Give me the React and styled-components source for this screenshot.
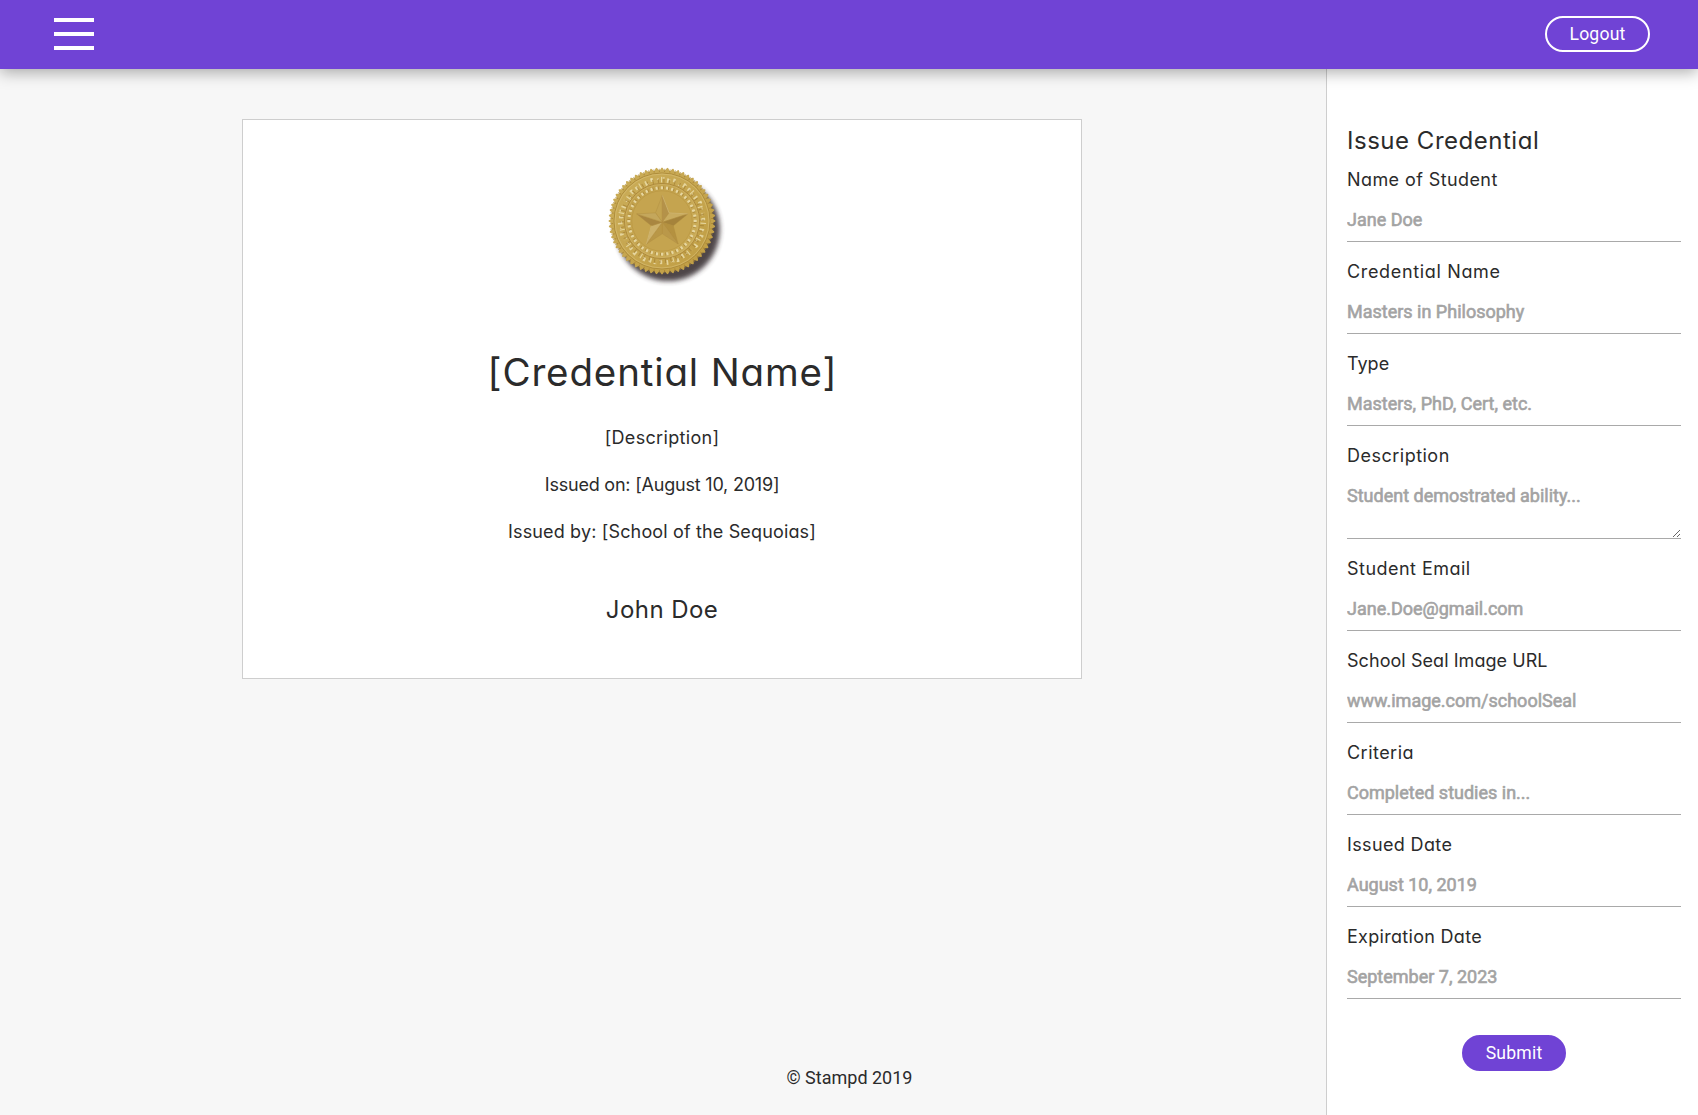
import React from "react";
import styled, { createGlobalStyle } from "styled-components";

const colors = {
  purple: "#7043d5",
  page: "#f7f7f7",
  text: "#2b2b2b",
  rule: "#a9a9a9",
  edge: "#cecece",
};

const GlobalStyle = createGlobalStyle`
  *, *::before, *::after { box-sizing: border-box; }
  body {
    margin: 0;
    color: ${colors.text};
    background: ${colors.page};
    font-family: Roboto, "Liberation Sans", sans-serif;
    font-size: 18px;
  }
`;

const Page = styled.div`
  display: flex;
  flex-direction: column;
  height: 100vh;
`;

const Header = styled.header`
  display: flex;
  flex: none;
  align-items: flex-start;
  justify-content: space-between;
  height: 69px;
  padding: 16px 48px 0 54px;
  background: ${colors.purple};
  box-shadow: 0 3px 15px rgba(0, 0, 0, 0.34);
  z-index: 1;
`;

const MenuButton = styled.button`
  display: flex;
  flex-direction: column;
  gap: 10px;
  width: 40px;
  margin: 2px 0 0;
  padding: 0;
  border: 0;
  background: none;
`;

const MenuBar = styled.span`
  height: 4px;
  background: #fff;
`;

const PillButton = styled.button`
  width: ${(p) => p.$width}px;
  height: 36px;
  padding: 0;
  border: 2px solid ${(p) => (p.$outlined ? "#fff" : colors.purple)};
  border-radius: 18px;
  background: ${colors.purple};
  color: #fff;
  font-family: inherit;
  font-size: 17.6px;
  line-height: 32px;
  letter-spacing: 0.2px;
`;

const Body = styled.div`
  display: flex;
  flex: 1;
  min-height: 0;
`;

const Main = styled.main`
  display: flex;
  flex: 1;
  flex-direction: column;
  justify-content: space-between;
  padding: 50px 2px 25px 0;
`;

const Certificate = styled.section`
  display: flex;
  flex-direction: column;
  align-items: center;
  align-self: center;
  width: 840px;
  height: 560px;
  padding-top: 35px;
  border: 1px solid ${colors.edge};
  background: #fff;
`;

const displayFont = `
  font-family: Inter, "Liberation Sans", sans-serif;
  font-feature-settings: "cv11";
  font-weight: 400;
`;

const CertificateName = styled.h1`
  ${displayFont}
  margin: 57px 0 26px;
  font-size: 38.5px;
  line-height: 56px;
  letter-spacing: 0.86px;
  text-indent: 0.86px;
`;

const CertificateLine = styled.p`
  ${displayFont}
  margin: 0 0 23px;
  font-size: 18px;
  line-height: 24px;
  letter-spacing: ${(p) => p.$tracking}px;
`;

const Signature = styled.p`
  ${displayFont}
  margin: 25px 0 0;
  font-size: 24px;
  line-height: 36px;
  letter-spacing: 0.43px;
`;

const Footer = styled.footer`
  padding-left: 375px;
  line-height: 24px;
  text-align: center;
`;

const Sidebar = styled.aside`
  display: flex;
  flex: none;
  flex-direction: column;
  width: 372px;
  padding: 54px 17px 0 20px;
  border-left: 1px solid ${colors.edge};
  background: #fff;
`;

const FormTitle = styled.h2`
  ${displayFont}
  margin: 0 0 9px;
  font-size: 24px;
  line-height: 36px;
  letter-spacing: 0.52px;
`;

const Form = styled.form`
  display: flex;
  flex-direction: column;
  gap: 18px;
`;

const Field = styled.label`
  display: flex;
  flex-direction: column;
  gap: 13px;
`;

const Label = styled.span`
  ${displayFont}
  font-size: 18px;
  line-height: 24px;
  letter-spacing: ${(p) => p.$tracking}px;
`;

const Input = styled.input`
  display: block;
  width: 100%;
  height: ${(p) => (p.$multiline ? 58 : 37)}px;
  padding: ${(p) => (p.$multiline ? "4px 0 0" : "0 0 8px")};
  border: 0;
  border-bottom: 1px solid ${colors.rule};
  border-radius: 0;
  outline: 0;
  background: transparent;
  font-family: inherit;
  font-size: 18px;
  line-height: 21px;

  &::placeholder {
    color: #a3a3a3;
    opacity: 1;
    -webkit-text-stroke: 0.6px #a3a3a3;
  }
`;

const Actions = styled.div`
  display: flex;
  justify-content: center;
  padding-top: 18px;
`;

const SealImage = styled.svg`
  display: block;
  flex: none;
  overflow: visible;
`;

const ring = (count, fn) => Array.from({ length: count }, (_, i) => fn((i * 360) / count, i));

const polar = (radius, degrees) => {
  const a = ((degrees - 90) * Math.PI) / 180;
  return [65 + radius * Math.cos(a), 65 + radius * Math.sin(a)];
};

const scallopedEdge = Array.from({ length: 480 }, (_, i) => {
  const a = (i / 480) * 360;
  const r = 51.3 + 1.4 * Math.cos((a * 60 * Math.PI) / 180);
  return polar(r, a).map((v) => v.toFixed(2)).join(",");
}).join(" ");

const starFacets = ring(5, (a) => {
  const tip = polar(26.5, a);
  return [
    { points: [tip, polar(11.4, a - 36), [65, 65]], side: "left", a },
    { points: [tip, polar(11.4, a + 36), [65, 65]], side: "right", a },
  ];
}).flat();

const facetColor = ({ side, a }) => {
  const shades = {
    0: ["#c3a351", "#b4924a"],
    72: ["#c9ac60", "#a5833a"],
    144: ["#b4913f", "#ba984a"],
    216: ["#b99746", "#cdb16a"],
    288: ["#a98640", "#c4a75b"],
  };
  return shades[a][side === "left" ? 0 : 1];
};

function Seal() {
  return (
    <SealImage width="132" height="132" viewBox="0 0 130 130" role="img" aria-label="School seal">
      <defs>
        <linearGradient id="gold" x1="0" y1="0" x2="1" y2="1">
          <stop offset="0" stopColor="#cbae58" />
          <stop offset="0.5" stopColor="#c6a650" />
          <stop offset="1" stopColor="#bf9c40" />
        </linearGradient>
        <linearGradient id="innerGold" x1="0" y1="0" x2="1" y2="1">
          <stop offset="0" stopColor="#c1a04b" />
          <stop offset="1" stopColor="#ccae5a" />
        </linearGradient>
        <filter id="sealShadow" x="-20%" y="-20%" width="150%" height="150%">
          <feGaussianBlur stdDeviation="2.8" />
        </filter>
        <filter id="soften">
          <feGaussianBlur stdDeviation="0.45" />
        </filter>
      </defs>
      <circle cx="71" cy="73.2" r="51" fill="#3a3034" opacity="0.9" filter="url(#sealShadow)" />
      <g filter="url(#soften)">
        <polygon points={scallopedEdge} fill="url(#gold)" />
        <circle cx="65" cy="65" r="47.3" fill="none" stroke="#ad8a3a" strokeWidth="0.9" />
        <circle cx="65" cy="65" r="46.2" fill="none" stroke="#d9c078" strokeWidth="0.6" />
        {ring(60, (a) => (
          <rect key={a} x="64.5" y="13.5" width="1" height="3.2" fill="#a07b2c" opacity="0.6" transform={`rotate(${a + 3} 65 65)`} />
        ))}
        {ring(46, (a, i) => (
          <g key={a} transform={`rotate(${a} 65 65)`}>
            <rect x={64 + (i % 3) * 0.4} y={21.5 + (i % 2)} width={1.1 + (i % 3) * 0.6} height={5.6 - (i % 3)} fill="#e8d9a4" opacity={i % 7 === 3 ? 0.1 : 0.9} />
            <rect x={65.6} y={22 + (i % 4) * 1.2} width="2" height="1.2" fill="#efe2b4" opacity={i % 5 === 2 ? 0 : 0.85} />
            <rect x="66.4" y="23.5" width="1" height="4" fill="#a37f33" opacity="0.7" />
          </g>
        ))}
        <circle cx="65" cy="65" r="37" fill="url(#innerGold)" stroke="#ab873a" strokeWidth="0.9" />
        <circle cx="65" cy="65" r="36" fill="none" stroke="#d3b76c" strokeWidth="0.5" />
        {ring(40, (a) => (
          <g key={a} transform={`rotate(${a} 65 65)`}>
            <rect x="63.8" y="30.8" width="2.2" height="3" rx="0.6" fill="#e6d6a0" />
            <rect x="66" y="31" width="0.9" height="2.8" fill="#a37f33" opacity="0.7" />
          </g>
        ))}
        <circle cx="65" cy="65" r="29.8" fill="#c5a44f" stroke="#b7943f" strokeWidth="0.6" />
        <g transform="translate(0.3 1.2)">
          {starFacets.map((f) => (
            <polygon
              key={f.side + f.a}
              points={f.points.map((p) => p.join(",")).join(" ")}
              fill={facetColor(f)}
              stroke="#b08d40"
              strokeWidth="0.4"
            />
          ))}
          <path d="M65 38.5L71.7 55.8L90.2 56.8M49.4 86.4L54.2 68.5" fill="none" stroke="#d9c27f" strokeWidth="0.6" />
        </g>
      </g>
    </SealImage>
  );
}

const fields = [
  { label: "Name of Student", placeholder: "Jane Doe", tracking: 0.41 },
  { label: "Credential Name", placeholder: "Masters in Philosophy", tracking: 0.66 },
  { label: "Type", placeholder: "Masters, PhD, Cert, etc.", tracking: 0 },
  { label: "Description", placeholder: "Student demostrated ability...", tracking: 0.49, multiline: true },
  { label: "Student Email", placeholder: "Jane.Doe@gmail.com", tracking: 0.47 },
  { label: "School Seal Image URL", placeholder: "www.image.com/schoolSeal", tracking: 0.06 },
  { label: "Criteria", placeholder: "Completed studies in...", tracking: 0.47 },
  { label: "Issued Date", placeholder: "August 10, 2019", tracking: 0.36 },
  { label: "Expiration Date", placeholder: "September 7, 2023", tracking: 0.3 },
];

export default function App() {
  return (
    <Page>
      <GlobalStyle />
      <Header>
        <MenuButton aria-label="Menu">
          <MenuBar />
          <MenuBar />
          <MenuBar />
        </MenuButton>
        <PillButton $outlined $width={105}>Logout</PillButton>
      </Header>
      <Body>
        <Main>
          <Certificate>
            <Seal />
            <CertificateName>[Credential Name]</CertificateName>
            <CertificateLine $tracking={0.32}>[Description]</CertificateLine>
            <CertificateLine $tracking={-0.21}>Issued on: [August 10, 2019]</CertificateLine>
            <CertificateLine $tracking={0.15}>Issued by: [School of the Sequoias]</CertificateLine>
            <Signature>John Doe</Signature>
          </Certificate>
          <Footer>© Stampd 2019</Footer>
        </Main>
        <Sidebar>
          <FormTitle>Issue Credential</FormTitle>
          <Form>
            {fields.map((f) => (
              <Field key={f.label}>
                <Label $tracking={f.tracking}>{f.label}</Label>
                <Input
                  as={f.multiline ? "textarea" : "input"}
                  $multiline={f.multiline}
                  placeholder={f.placeholder}
                />
              </Field>
            ))}
            <Actions>
              <PillButton type="button" $width={104}>Submit</PillButton>
            </Actions>
          </Form>
        </Sidebar>
      </Body>
    </Page>
  );
}
